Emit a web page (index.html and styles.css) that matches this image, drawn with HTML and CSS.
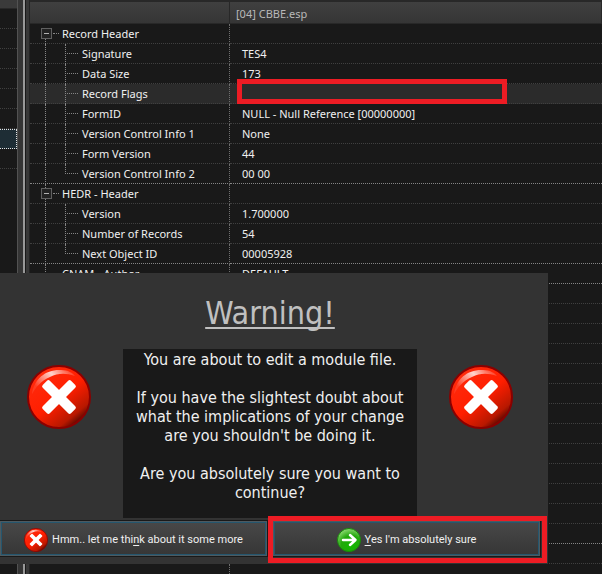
FILE: index.html
```
<!DOCTYPE html>
<html lang="en">
<head>
<meta charset="utf-8">
<title>Record view</title>
<link rel="stylesheet" href="styles.css">
</head>
<body>
<svg class="defs" aria-hidden="true">
  <defs>
    <linearGradient id="red" x1="0.2" y1="0.1" x2="0.85" y2="0.9">
      <stop offset="0" stop-color="#ff2a0c"/><stop offset="0.5" stop-color="#ff1e00"/><stop offset="0.85" stop-color="#b81800"/><stop offset="1" stop-color="#4c0500"/>
    </linearGradient>
    <linearGradient id="shine" x1="0" y1="0.5" x2="1" y2="0">
      <stop offset="0" stop-color="#fff" stop-opacity="0.1"/><stop offset="0.5" stop-color="#fff" stop-opacity="0.8"/><stop offset="1" stop-color="#fff" stop-opacity="0"/>
    </linearGradient>
    <radialGradient id="green" cx="0.6" cy="0.75" r="0.8">
      <stop offset="0" stop-color="#12b800"/><stop offset="0.55" stop-color="#22a80c"/><stop offset="1" stop-color="#9be080"/>
    </radialGradient>
    <symbol id="stop" viewBox="0 0 64 64">
      <circle cx="32" cy="32" r="31" fill="url(#red)" stroke="#8a0000" stroke-width="2"/>
      <path d="M5 29C7 13 20 4 34 5c7 0 12 3 14 6-9-3-17-3-25 1C14 16 9 22 5 29Z" fill="url(#shine)"/>
      <g fill="#fff" transform="rotate(45 32 32)"><rect x="12" y="27" width="40" height="10" rx="2"/><rect x="27" y="12" width="10" height="40" rx="2"/></g>
    </symbol>
    <symbol id="go" viewBox="0 0 24 24">
      <circle cx="12" cy="12" r="11.5" fill="url(#green)" stroke="#168a08"/>
      <path d="M6 12H18M13 7l5.500 5-5.500 5" fill="none" stroke="#fff" stroke-width="2.500" stroke-linecap="round" stroke-linejoin="round"/>
    </symbol>
  </defs>
</svg>
<div class="app">
  <aside class="side">
    <div class="side-head"></div>
    <div class="side-row"></div><div class="side-row"></div><div class="side-row"></div><div class="side-row"></div><div class="side-row"></div><div class="side-row"></div>
    <div class="side-row selected"></div><div class="side-row"></div>
  </aside>
  <div class="splitter"></div>
  <main class="view">
    <table class="records">
      <colgroup><col class="name-col"><col></colgroup>
      <thead><tr><th></th><th>[04] CBBE.esp</th></tr></thead>
      <tbody>
        <tr class="root"><td><button class="toggle" aria-label="Collapse"></button>Record Header</td><td></td></tr>
        <tr class="child"><td>Signature</td><td>TES4</td></tr>
        <tr class="child"><td>Data Size</td><td>173</td></tr>
        <tr class="child current"><td>Record Flags</td><td><span class="mark"></span></td></tr>
        <tr class="child"><td>FormID</td><td>NULL - Null Reference [00000000]</td></tr>
        <tr class="child"><td>Version Control Info 1</td><td>None</td></tr>
        <tr class="child"><td>Form Version</td><td>44</td></tr>
        <tr class="child last"><td>Version Control Info 2</td><td>00 00</td></tr>
        <tr class="root next"><td><button class="toggle" aria-label="Collapse"></button>HEDR - Header</td><td></td></tr>
        <tr class="child"><td>Version</td><td>1.700000</td></tr>
        <tr class="child"><td>Number of Records</td><td>54</td></tr>
        <tr class="child last"><td>Next Object ID</td><td>00005928</td></tr>
        <tr class="root next leaf strong"><td>CNAM - Author</td><td>DEFAULT</td></tr>
        <tr><td></td><td></td></tr><tr><td></td><td></td></tr><tr><td></td><td></td></tr><tr><td></td><td></td></tr>
        <tr><td></td><td></td></tr><tr><td></td><td></td></tr><tr><td></td><td></td></tr><tr><td></td><td></td></tr>
        <tr><td></td><td></td></tr><tr><td></td><td></td></tr><tr><td></td><td></td></tr><tr><td></td><td></td></tr>
        <tr class="strong"><td></td><td></td></tr><tr><td></td><td></td></tr><tr><td></td><td></td></tr>
      </tbody>
    </table>
  </main>
</div>
<section class="dialog" role="alertdialog" aria-labelledby="title" aria-describedby="message">
  <h1 id="title">Warning!</h1>
  <div class="body">
    <svg class="big"><use href="#stop"/></svg>
    <div class="message" id="message">
      <p>You are about to edit a module file.</p>
      <p>If you have the slightest doubt about<br>what the implications of your change<br>are you shouldn't be doing it.</p>
      <p>Are you absolutely sure you want to<br>continue?</p>
    </div>
    <svg class="big"><use href="#stop"/></svg>
  </div>
  <div class="actions">
    <button class="action"><svg><use href="#stop"/></svg><span>Hmm.. let me thi<u>n</u>k about it some more</span></button>
    <button class="action marked"><svg><use href="#go"/></svg><span><u>Y</u>es I'm absolutely sure</span></button>
  </div>
</section>
</body>
</html>
```
FILE: styles.css
```
* { box-sizing: border-box; }
body {
  margin: 0;
  height: 100vh;
  overflow: hidden;
  position: relative;
  background: #191919;
  color: #f0f0f0;
  font: 11px/20px "Noto Sans", sans-serif;
}
.defs { position: absolute; width: 0; height: 0; }
.app { display: flex; height: 100%; }

.side { flex: 0 0 17px; }
.side-head { height: 9px; background: #3a3a3a; border-bottom: 1px solid #282828; }
.side-row { height: 20px; border-bottom: 1px dotted #404040; }
.side-row.selected { background: #1e2d35; border: 1px dotted #e0e0e0; border-left: 0; }
.splitter {
  flex: 0 0 13px;
  background: linear-gradient(90deg, #525252 0 1px, #353535 1px 6px, #999 6px 8px, #191919 8px 9px, #383838 9px 12px, #252525 12px);
}

.view { flex: 1; overflow: hidden; }
.records { width: 100%; table-layout: fixed; border-collapse: separate; border-spacing: 0; }
.name-col { width: 200px; }
.records th {
  height: 24px;
  padding: 3px 0 0 6px;
  border: solid #282828;
  border-width: 2px 1px 1px 0;
  background: linear-gradient(#404040, #353535);
  color: #b8b8b8;
  font-weight: 400;
  line-height: 16px;
  text-align: left;
}
.records td {
  height: 20px;
  padding: 0 0 0 12px;
  border-bottom: 1px dotted #404040;
  line-height: 19px;
  white-space: nowrap;
}
.records td:first-child { position: relative; border-right: 1px dotted #707070; }
.records .root td:first-child { padding-left: 32px; }
.records .child td:first-child { padding-left: 52px; }
.records .last td, .records .strong td { border-bottom-color: #858585; }
.current { background: #2b2b2b; }

.child td:first-child::before, .root td:first-child::before {
  content: "";
  position: absolute;
  top: 0;
  left: 15px;
  height: 20px;
  border-left: 1px dotted #858585;
}
.root:not(.next) td:first-child::before { top: 15px; height: 5px; }
.child td:first-child::after {
  content: "";
  position: absolute;
  top: 0;
  left: 35px;
  width: 13px;
  height: 20px;
  border-left: 1px dotted #858585;
  background: repeating-linear-gradient(90deg, #858585 0 1px, transparent 1px 2px) 1px 9px / 12px 1px no-repeat;
}
.last td:first-child::after { height: 10px; }
.root:not(.leaf) td:first-child::after {
  content: "";
  position: absolute;
  top: 9px;
  left: 23px;
  width: 6px;
  border-top: 1px dotted #858585;
}
.toggle {
  position: absolute;
  z-index: 1;
  left: 11px;
  top: 4px;
  width: 11px;
  height: 11px;
  padding: 0;
  border: 1px solid #606060;
  background: linear-gradient(#b0b0b0, #b0b0b0) center / 5px 1px no-repeat #222;
}
.records .current td:last-child { position: relative; }
.mark {
  position: absolute;
  z-index: 1;
  top: -5px;
  left: 7px;
  width: 270px;
  height: 25px;
  border: 5px solid #ed1c24;
}

.dialog {
  position: absolute;
  z-index: 2;
  top: 273px;
  left: 0;
  width: 548px;
  padding-bottom: 8px;
  background: #333;
  font-family: "DejaVu Sans Condensed", "DejaVu Sans", sans-serif;
}
.dialog h1 {
  margin: 0;
  padding: 20px 8px 16px 0;
  color: #c0c0c0;
  font-size: 32px;
  font-weight: 400;
  line-height: 40px;
  text-align: center;
  text-decoration: underline;
  text-decoration-thickness: 2px;
  text-underline-offset: 3px;
  text-decoration-skip-ink: none;
}
.body { display: flex; justify-content: space-between; padding: 0 35px 0 27px; }
.big { width: 64px; height: 64px; margin-top: 16px; }
.message {
  flex: 0 0 294px;
  padding: 1px 0 16px;
  background: #191919;
  font-size: 16px;
  line-height: 19px;
  text-align: center;
  white-space: nowrap;
}
.message p { margin: 0 0 19px; }
.message p:last-child { margin: 0; }
.actions { display: flex; gap: 6px; padding: 3px 8px 0 0; }
.action {
  flex: 1;
  position: relative;
  display: flex;
  align-items: center;
  justify-content: center;
  gap: 4px;
  height: 35px;
  padding: 2px 0 0;
  border: 1px solid #4d5a60;
  outline: 1px solid #191919;
  box-shadow: inset 0 0 0 1px #25566e;
  background: linear-gradient(#484848, #363636);
  color: #f0f0f0;
  font: 11px/16px Roboto, sans-serif;
}
.action svg { width: 24px; height: 24px; }
.action u { text-underline-offset: 2px; text-decoration-skip-ink: none; }
.marked::after {
  content: "";
  position: absolute;
  inset: -6px -8px -8px -6px;
  border: 5px solid #ed1c24;
}
```
